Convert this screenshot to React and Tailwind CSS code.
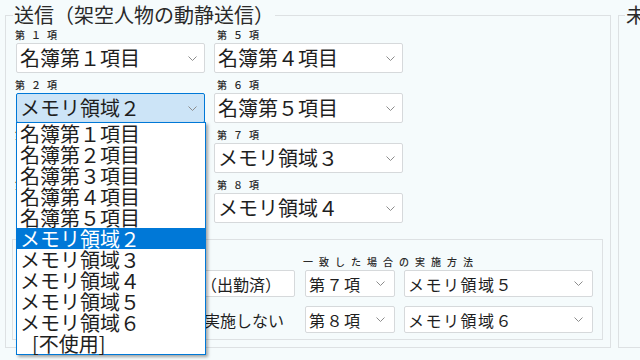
const jp = { fontFamily: '"Noto Sans CJK JP", "Noto Sans", sans-serif' }

const Chevron = () => (
  <svg width="9" height="5" viewBox="0 0 9 5" className="shrink-0">
    <path d="M0.5 0.5 L4.5 4.5 L8.5 0.5" fill="none" stroke="#8c8c8c" strokeWidth="1" />
  </svg>
)

const Combo = ({ value, focused }) => (
  <div
    className={`h-[30px] w-[189px] flex items-center justify-between pl-[3px] pr-[7px] rounded-[2px] border ${
      focused ? 'bg-[#cce4f7] border-[#0078d7]' : 'bg-white border-[#d6d9db]'
    }`}
  >
    <span className="text-[20px] leading-[24px] text-[#1e1e1e] whitespace-nowrap">{value}</span>
    <Chevron />
  </div>
)

const SmallCombo = ({ value, width }) => (
  <div
    className={`h-[27px] ${width} flex items-center justify-between pl-[3px] pr-[9px] rounded-[2px] border bg-white border-[#d6d9db] shrink-0`}
  >
    <span className="text-[16px] leading-[20px] tracking-[1.5px] text-[#1e1e1e] whitespace-nowrap">{value}</span>
    <Chevron />
  </div>
)

const Label = ({ text, first }) => (
  <div
    className={`${first ? 'h-[16px] pt-[3px]' : 'h-[20px] pt-[7px]'} text-[10px] leading-[10px] tracking-[6px] font-medium text-[#2a2a2a] whitespace-nowrap`}
  >
    {text}
  </div>
)

const LIST = [
  '名簿第１項目',
  '名簿第２項目',
  '名簿第３項目',
  '名簿第４項目',
  '名簿第５項目',
  'メモリ領域２',
  'メモリ領域３',
  'メモリ領域４',
  'メモリ領域５',
  'メモリ領域６',
  '[不使用]',
]

export default function App() {
  const left = [
    ['第１項', '名簿第１項目'],
    ['第２項', 'メモリ領域２', true],
    ['第３項', '名簿第２項目'],
    ['第４項', '名簿第３項目'],
  ]
  const right = [
    ['第５項', '名簿第４項目'],
    ['第６項', '名簿第５項目'],
    ['第７項', 'メモリ領域３'],
    ['第８項', 'メモリ領域４'],
  ]

  return (
    <div className="relative w-[640px] h-[360px] overflow-hidden bg-[#f5fbfc] flex items-start pt-[3px]" style={jp}>
      {/* 送信 group */}
      <fieldset className="ml-[5px] w-[606px] h-[345px] shrink-0 border border-[#dde1e3] pl-[6px] pr-[7px]">
        <legend className="ml-[1px] px-[1px] text-[20px] leading-[24px] text-[#2a2a2a] whitespace-nowrap">
          送信（架空人物の動静送信）
        </legend>

        <div className="ml-[4px] flex gap-[9px]">
          <div className="flex flex-col">
            {left.map(([l, v, f], i) => (
              <div key={l}>
                <div className="-ml-[1px]">
                  <Label text={l} first={i === 0} />
                </div>
                <Combo value={v} focused={f} />
              </div>
            ))}
          </div>
          <div className="flex flex-col">
            {right.map(([l, v], i) => (
              <div key={l}>
                <div className="ml-[3px]">
                  <Label text={l} first={i === 0} />
                </div>
                <Combo value={v} />
              </div>
            ))}
          </div>
        </div>

        {/* 条件 group */}
        <div className="mt-[16px] w-[591px] h-[101px] border border-[#dde1e3] pt-[17px]">
          <div className="pl-[290px] h-[13px] text-[10px] leading-[10px] tracking-[6px] font-medium text-[#2a2a2a] whitespace-nowrap">
            一致した場合の実施方法
          </div>
          <div className="flex items-center pr-[9px]">
            <div className="flex-1 flex justify-end pr-[10px]">
              <div className="h-[27px] w-[250px] flex items-center justify-end pr-[13px] bg-white border border-[#d6d9db] rounded-[2px] text-[16px] leading-[20px] text-[#1e1e1e] whitespace-nowrap">
                勤務状態（出勤済）
              </div>
            </div>
            <SmallCombo value="第７項" width="w-[90px]" />
            <div className="w-[9px] shrink-0" />
            <SmallCombo value="メモリ領域５" width="w-[189px]" />
          </div>
          <div className="mt-[9px] flex items-center pr-[9px]">
            <div className="flex-1 flex justify-end pr-[21px] text-[16px] leading-[20px] text-[#1e1e1e] whitespace-nowrap">
              一致しない場合は実施しない
            </div>
            <SmallCombo value="第８項" width="w-[90px]" />
            <div className="w-[9px] shrink-0" />
            <SmallCombo value="メモリ領域６" width="w-[189px]" />
          </div>
        </div>
      </fieldset>

      {/* 未 group (cut off) */}
      <fieldset className="ml-[7px] w-[200px] h-[345px] shrink-0 border border-[#dde1e3] pl-[6px]">
        <legend className="px-[1px] text-[20px] leading-[24px] text-[#2a2a2a] whitespace-nowrap">未送信</legend>
      </fieldset>

      {/* open dropdown list */}
      <div className="absolute left-[16px] top-[122px] w-[190px] bg-white border border-[#0078d7] shadow-[2px_2px_3px_rgba(0,0,0,0.35)]">
        {LIST.map((item) => {
          const sel = item === 'メモリ領域２'
          return (
            <div
              key={item}
              className={`h-[21px] text-[20px] leading-[21px] whitespace-nowrap ${
                sel ? 'bg-[#0078d7] text-white pl-[3px]' : 'text-[#1e1e1e] pl-[3px]'
              } ${item === '[不使用]' ? 'pl-[15px]' : ''}`}
            >
              {item}
            </div>
          )
        })}
      </div>
    </div>
  )
}
